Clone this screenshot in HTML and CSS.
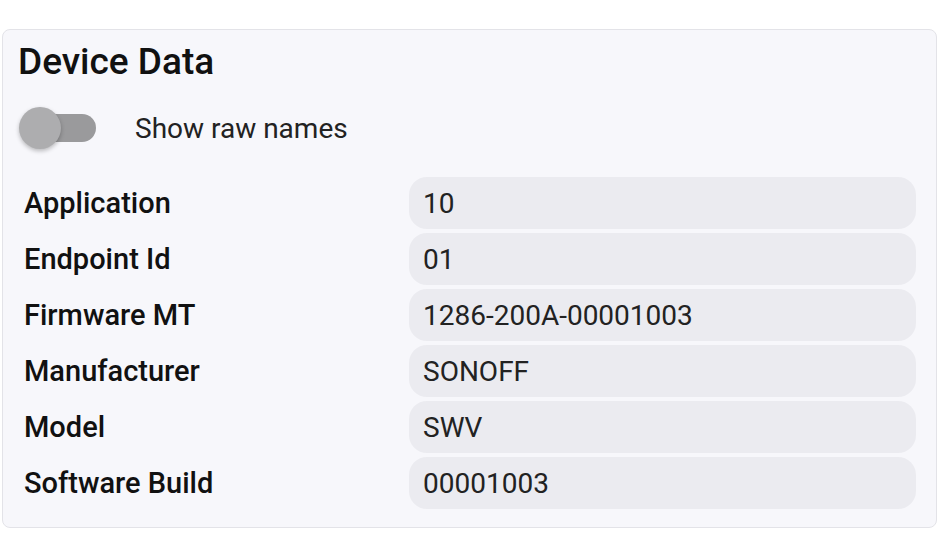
FILE: index.html
```html
<!DOCTYPE html>
<html>
<head>
<meta charset="utf-8">
<link rel="stylesheet" href="styles.css">
</head>
<body>
<div class="card">
  <h2 class="title">Device Data</h2>
  <div class="toggle-row">
    <div class="switch"><div class="track"></div><div class="thumb"></div></div>
    <span class="toggle-label">Show raw names</span>
  </div>
  <div class="rows">
    <div class="row"><div class="label">Application</div><div class="value">10</div></div>
    <div class="row"><div class="label">Endpoint Id</div><div class="value">01</div></div>
    <div class="row"><div class="label">Firmware MT</div><div class="value">1286-200A-00001003</div></div>
    <div class="row"><div class="label">Manufacturer</div><div class="value">SONOFF</div></div>
    <div class="row"><div class="label">Model</div><div class="value">SWV</div></div>
    <div class="row"><div class="label">Software Build</div><div class="value">00001003</div></div>
  </div>
</div>
</body>
</html>
```
FILE: styles.css
```css
* { box-sizing: border-box; }
html, body { margin: 0; padding: 0; background: #ffffff; }
body {
  font-family: Roboto, "Liberation Sans", sans-serif;
  color: #1c1b1f;
  padding: 29px 8px 0 2px;
}
.card {
  width: 935px;
  height: 499px;
  background: #f7f7fb;
  border: 1px solid #e3e3e8;
  border-radius: 8px;
  padding: 8px 20px 0 15px;
}
.title {
  margin: 0;
  font-size: 37px;
  font-weight: 500;
  line-height: 48px;
  color: #111;
  padding-left: 0;
}
.toggle-row {
  display: flex;
  align-items: center;
  height: 48px;
  margin-top: 18px;
  padding-left: 1px;
}
.switch {
  position: relative;
  width: 79px;
  height: 42px;
  flex: none;
}
.track {
  position: absolute;
  left: 21px;
  top: 7px;
  width: 56px;
  height: 28px;
  border-radius: 14px;
  background: #9a9a9c;
}
.thumb {
  position: absolute;
  left: 0;
  top: 0;
  width: 42px;
  height: 42px;
  border-radius: 50%;
  background: #adadaf;
  box-shadow: 0 2px 4px rgba(0,0,0,0.25);
}
.toggle-label {
  margin-left: 37px;
  font-size: 28px;
  color: #222;
}
.rows {
  margin-top: 25px;
  display: flex;
  flex-direction: column;
  gap: 4px;
}
.row {
  display: grid;
  grid-template-columns: 391px 1fr;
  align-items: center;
  height: 52px;
}
.label {
  padding-left: 6px;
  font-size: 29px;
  font-weight: 500;
  color: #111;
}
.value {
  height: 52px;
  background: #ebebf0;
  border-radius: 18px;
  display: flex;
  align-items: center;
  padding-left: 14px;
  font-size: 28px;
  color: #222;
}
```
